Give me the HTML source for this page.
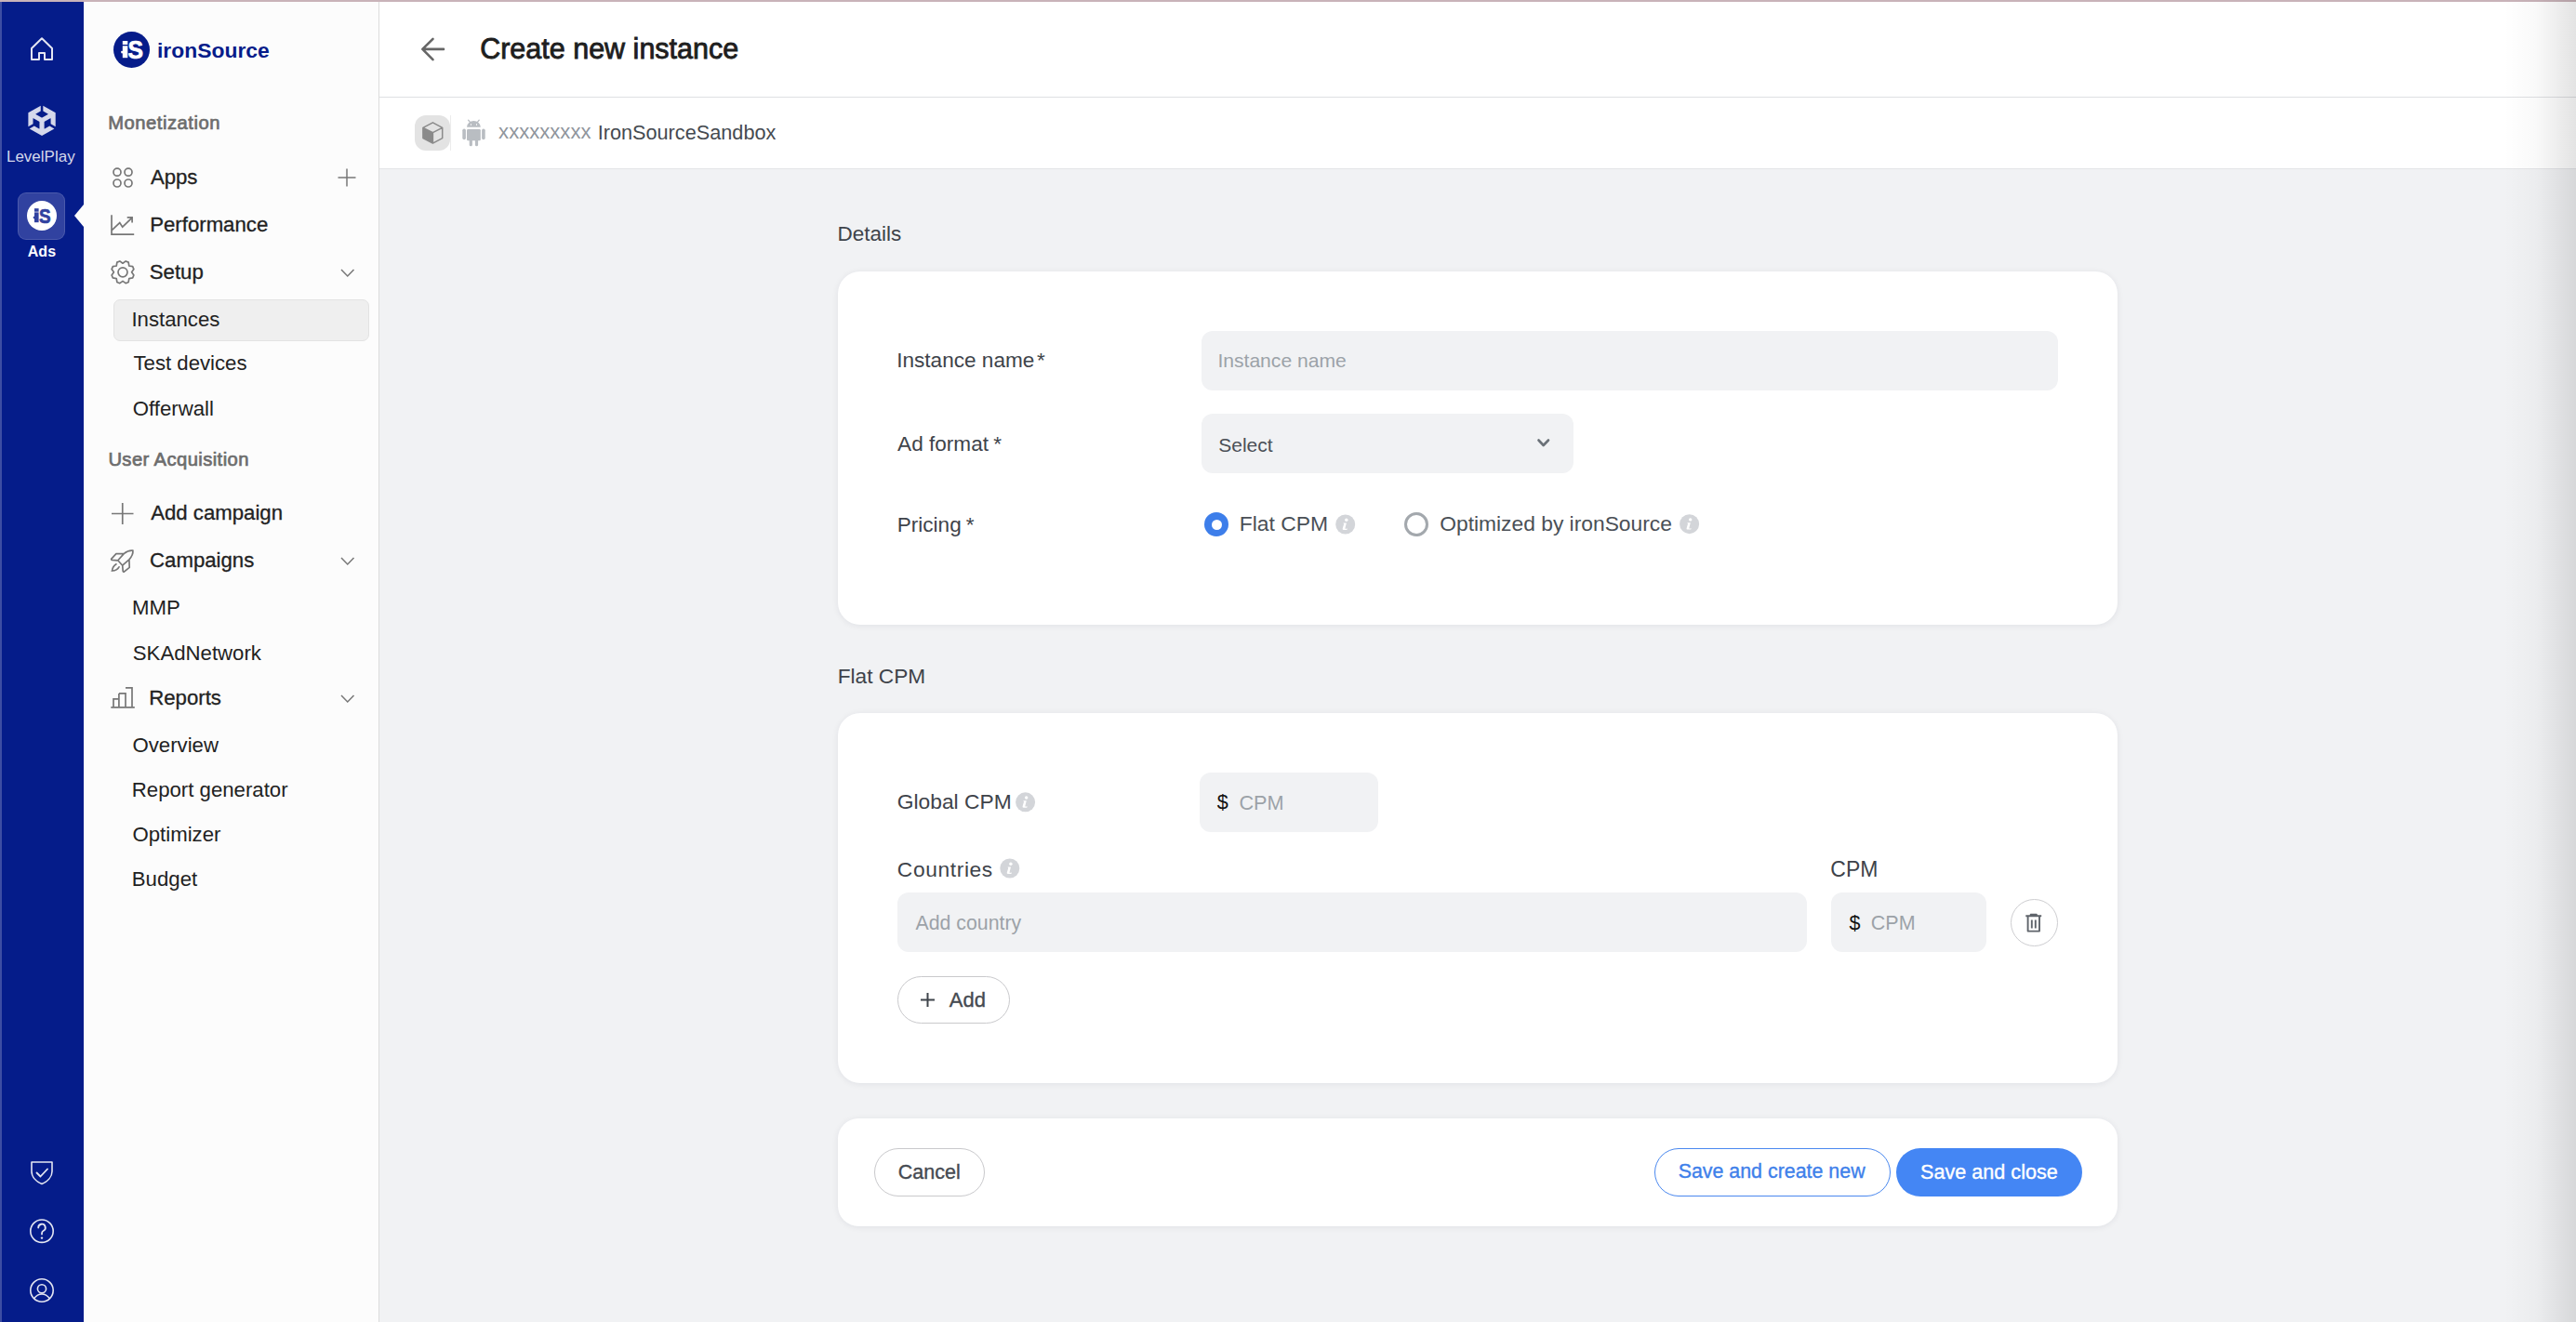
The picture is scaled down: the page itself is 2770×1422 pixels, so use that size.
<!DOCTYPE html>
<html><head><meta charset="utf-8"><style>
html,body{margin:0;padding:0;width:2770px;height:1422px;overflow:hidden;background:#f1f2f4}
.a{position:absolute}
.t{position:absolute;white-space:nowrap;line-height:1;font-family:"Liberation Sans",sans-serif}
svg.ov{position:absolute;left:0;top:0;pointer-events:none}
</style></head><body>
<div class="a" style="left:0px;top:0px;width:2770px;height:1422px;background:#f1f2f4"></div><div class="a" style="left:408px;top:0px;width:2362px;height:104px;background:#fff"></div><div class="a" style="left:408px;top:104px;width:2362px;height:1px;background:#dfe0e3"></div><div class="a" style="left:408px;top:105px;width:2362px;height:76px;background:#fff"></div><div class="a" style="left:408px;top:181px;width:2362px;height:1px;background:#e3e4e7"></div><div class="a" style="left:90px;top:0px;width:317px;height:1422px;background:#fcfcfc"></div><div class="a" style="left:407px;top:0px;width:1px;height:1422px;background:#dcdcdc"></div><div class="a" style="left:0px;top:0px;width:90px;height:1422px;background:#051c8a"></div><div class="a" style="left:0px;top:0px;width:2px;height:1422px;background:#3d4da3"></div><div class="a" style="left:0px;top:0px;width:2770px;height:2px;background:#c9b3b9"></div><div class="a" style="left:2692px;top:0px;width:78px;height:1422px;background:linear-gradient(90deg,rgba(0,0,0,0) 0%,rgba(0,0,0,0.025) 45%,rgba(0,0,0,0.11) 100%)"></div><div class="a" style="left:19px;top:207px;width:51px;height:51px;background:#3142a0;border:1px solid rgba(255,255,255,0.13);box-sizing:border-box;border-radius:9px"></div><div class="a" style="left:29px;top:216px;width:32px;height:32px;background:#fff;border-radius:50%"></div><div class="t" style="left:6.94px;top:160.05px;font-size:17px;color:#d5d8eb;font-weight:400;">LevelPlay</div><div class="t" style="left:29.82px;top:262.90px;font-size:16px;color:#ffffff;font-weight:700;">Ads</div><div class="a" style="left:80px;top:220px;width:0;height:0;border-top:12px solid transparent;border-bottom:12px solid transparent;border-right:10px solid #fcfcfc"></div><div class="a" style="left:122px;top:34px;width:39px;height:39px;background:#061c8a;border-radius:50%"></div><div class="t" style="left:169.00px;top:42.53px;font-size:22.9px;color:#061c8a;font-weight:700;">ironSource</div><div class="t" style="left:116.28px;top:121.83px;font-size:20.2px;color:#6d6d6d;font-weight:400;-webkit-text-stroke:0.7px currentColor;letter-spacing:0.52px;">Monetization</div><div class="t" style="left:161.90px;top:179.53px;font-size:22.2px;color:#222222;font-weight:400;-webkit-text-stroke:0.3px currentColor;">Apps</div><div class="t" style="left:161.22px;top:231.03px;font-size:22.2px;color:#222222;font-weight:400;-webkit-text-stroke:0.3px currentColor;">Performance</div><div class="t" style="left:160.79px;top:281.83px;font-size:22.2px;color:#222222;font-weight:400;-webkit-text-stroke:0.3px currentColor;">Setup</div><div class="a" style="left:122px;top:322px;width:275px;height:45px;background:#efefef;border:1px solid #e3e3e3;border-radius:7px;box-sizing:border-box"></div><div class="t" style="left:141.40px;top:332.63px;font-size:22.2px;color:#222222;font-weight:400;">Instances</div><div class="t" style="left:143.46px;top:380.23px;font-size:22.2px;color:#222222;font-weight:400;">Test devices</div><div class="t" style="left:142.79px;top:428.93px;font-size:22.2px;color:#222222;font-weight:400;">Offerwall</div><div class="t" style="left:116.38px;top:483.83px;font-size:20.2px;color:#6d6d6d;font-weight:400;-webkit-text-stroke:0.7px currentColor;letter-spacing:0.42px;">User Acquisition</div><div class="t" style="left:162.20px;top:540.93px;font-size:22.2px;color:#222222;font-weight:400;-webkit-text-stroke:0.3px currentColor;">Add campaign</div><div class="t" style="left:161.09px;top:592.03px;font-size:22.2px;color:#222222;font-weight:400;-webkit-text-stroke:0.3px currentColor;">Campaigns</div><div class="t" style="left:142.12px;top:643.43px;font-size:22.2px;color:#222222;font-weight:400;">MMP</div><div class="t" style="left:142.79px;top:691.83px;font-size:22.2px;color:#222222;font-weight:400;">SKAdNetwork</div><div class="t" style="left:160.22px;top:739.83px;font-size:22.2px;color:#222222;font-weight:400;-webkit-text-stroke:0.3px currentColor;">Reports</div><div class="t" style="left:142.49px;top:791.13px;font-size:22.2px;color:#222222;font-weight:400;">Overview</div><div class="t" style="left:141.82px;top:839.23px;font-size:22.2px;color:#222222;font-weight:400;">Report generator</div><div class="t" style="left:142.49px;top:887.03px;font-size:22.2px;color:#222222;font-weight:400;">Optimizer</div><div class="t" style="left:141.82px;top:935.23px;font-size:22.2px;color:#222222;font-weight:400;">Budget</div><div class="t" style="left:516.18px;top:37.28px;font-size:30.5px;color:#1e1e1e;font-weight:400;-webkit-text-stroke:0.85px currentColor;">Create new instance</div><div class="a" style="left:446px;top:124px;width:38px;height:38px;background:#e3e3e3;border-radius:12px"></div><div class="a" style="left:484px;top:124px;width:1px;height:38px;background:#ececec"></div><div class="t" style="left:536.08px;top:131.22px;font-size:22.1px;color:#8f959c;font-weight:400;">xxxxxxxxx</div><div class="t" style="left:642.65px;top:131.75px;font-size:21.7px;color:#454a50;font-weight:400;">IronSourceSandbox</div><div class="t" style="left:900.60px;top:240.88px;font-size:22.5px;color:#3e434a;font-weight:400;">Details</div><div class="a" style="left:901px;top:292px;width:1376px;height:380px;background:#fff;border-radius:24px;box-shadow:0 1px 7px rgba(20,30,50,0.075);"></div><div class="t" style="left:964.17px;top:376.79px;font-size:22.6px;color:#3e434a;font-weight:400;">Instance name</div><div class="t" style="left:1115.07px;top:376.79px;font-size:22.6px;color:#3e434a;font-weight:400;">*</div><div class="a" style="left:1292px;top:356px;width:921px;height:64px;background:#f1f2f4;border-radius:12px"></div><div class="t" style="left:1309.40px;top:377.06px;font-size:21.1px;color:#9ca2a8;font-weight:400;">Instance name</div><div class="t" style="left:965.10px;top:466.79px;font-size:22.6px;color:#3e434a;font-weight:400;">Ad format</div><div class="t" style="left:1068.37px;top:466.79px;font-size:22.6px;color:#3e434a;font-weight:400;">*</div><div class="a" style="left:1292px;top:445px;width:400px;height:64px;background:#f1f2f4;border-radius:12px"></div><div class="t" style="left:1310.25px;top:467.65px;font-size:21px;color:#4a4f56;font-weight:400;">Select</div><div class="t" style="left:964.69px;top:553.59px;font-size:22.6px;color:#3e434a;font-weight:400;">Pricing</div><div class="t" style="left:1038.87px;top:553.59px;font-size:22.6px;color:#3e434a;font-weight:400;">*</div><div class="a" style="left:1295px;top:551px;width:26px;height:26px;background:#3d7eea;border-radius:50%"></div><div class="a" style="left:1302.5px;top:558.5px;width:11px;height:11px;background:#fff;border-radius:50%"></div><div class="t" style="left:1332.67px;top:551.63px;font-size:22.9px;color:#4a4f56;font-weight:400;">Flat CPM</div><div class="a" style="left:1510px;top:551px;width:26px;height:26px;border:3px solid #a3a8ad;border-radius:50%;box-sizing:border-box"></div><div class="t" style="left:1548.26px;top:551.62px;font-size:22.8px;color:#4a4f56;font-weight:400;">Optimized by ironSource</div><div class="t" style="left:900.68px;top:715.71px;font-size:22.7px;color:#3e434a;font-weight:400;">Flat CPM</div><div class="a" style="left:901px;top:767px;width:1376px;height:398px;background:#fff;border-radius:24px;box-shadow:0 1px 7px rgba(20,30,50,0.075);"></div><div class="t" style="left:964.76px;top:851.02px;font-size:22.8px;color:#3e434a;font-weight:400;">Global CPM</div><div class="a" style="left:1290px;top:831px;width:192px;height:64px;background:#f1f2f4;border-radius:12px"></div><div class="t" style="left:1308.79px;top:853.23px;font-size:21.5px;color:#111;font-weight:400;">$</div><div class="t" style="left:1332.41px;top:852.55px;font-size:21.7px;color:#9ca2a8;font-weight:400;">CPM</div><div class="t" style="left:964.86px;top:924.32px;font-size:22.8px;color:#3e434a;font-weight:400;letter-spacing:0.6px;">Countries</div><div class="t" style="left:1968.35px;top:923.85px;font-size:23px;color:#3e434a;font-weight:400;">CPM</div><div class="a" style="left:965px;top:960px;width:978px;height:64px;background:#f1f2f4;border-radius:12px"></div><div class="t" style="left:984.50px;top:983.29px;font-size:21.3px;color:#9ca2a8;font-weight:400;">Add country</div><div class="a" style="left:1969px;top:960px;width:167px;height:64px;background:#f1f2f4;border-radius:12px"></div><div class="t" style="left:1988.38px;top:983.23px;font-size:21.5px;color:#111;font-weight:400;">$</div><div class="t" style="left:2011.83px;top:982.73px;font-size:21.5px;color:#9ca2a8;font-weight:400;">CPM</div><div class="a" style="left:2162px;top:967px;width:51px;height:51px;border:1px solid #cdcdd0;border-radius:50%;box-sizing:border-box;background:#fff"></div><div class="a" style="left:965px;top:1050px;width:121px;height:51px;border:1px solid #c9c9cc;border-radius:26px;box-sizing:border-box;background:#fff"></div><div class="t" style="left:1020.80px;top:1065.30px;font-size:22px;color:#454a51;font-weight:400;-webkit-text-stroke:0.35px currentColor;">Add</div><div class="a" style="left:901px;top:1203px;width:1376px;height:116px;background:#fff;border-radius:22px;box-shadow:0 1px 7px rgba(20,30,50,0.075);"></div><div class="a" style="left:940px;top:1235px;width:119px;height:52px;border:1px solid #c9c9cc;border-radius:26px;box-sizing:border-box;background:#fff"></div><div class="t" style="left:965.82px;top:1251.02px;font-size:21.5px;color:#454a51;font-weight:400;-webkit-text-stroke:0.35px currentColor;">Cancel</div><div class="a" style="left:1779px;top:1235px;width:254px;height:52px;border:1.5px solid #4a88ef;border-radius:26px;box-sizing:border-box;background:#fff"></div><div class="t" style="left:1804.63px;top:1250.11px;font-size:21.4px;color:#3e80ea;font-weight:400;-webkit-text-stroke:0.35px currentColor;">Save and create new</div><div class="a" style="left:2039px;top:1235px;width:200px;height:52px;background:#4486f4;border-radius:26px"></div><div class="t" style="left:2065.12px;top:1249.94px;font-size:21.6px;color:#ffffff;font-weight:400;-webkit-text-stroke:0.35px currentColor;">Save and close</div>
<svg class="ov" width="2770" height="1422" viewBox="0 0 2770 1422"><path d="M34 64 V52 L45 41.3 L56 52 V64 H48 V57 H42 V64 Z" fill="none" stroke="#e4e6f2" stroke-width="2" stroke-linejoin="round"/><g transform="translate(45.05 129.8) scale(1.38 1.342) translate(-12 -12)"><path d="m12.9288 4.2939 3.7997 2.1929c.1366.077.1415.2905 0 .3675l-4.515 2.6076a.4192.4192 0 0 1-.4246 0L7.274 6.8543c-.139-.0745-.1415-.2905 0-.3675l3.7972-2.193V0L1.3758 5.5977V16.793l3.7177-2.1456v-4.3858c-.0025-.1565.1813-.2682.318-.1838l4.5148 2.6076a.4252.4252 0 0 1 .2136.3676v5.2127c.0025.1565-.1813.2682-.3179.1838l-3.7996-2.1929-3.7178 2.1457L12 24l9.6954-5.5977-3.7178-2.1457-3.7996 2.1929c-.1341.082-.3229-.0248-.3179-.1838V13.053c0-.1565.087-.2956.2136-.3676l4.5149-2.6076c.1341-.082.3228.0224.3179.1838v4.3858l3.7177 2.1456V5.5977L12.9288 0Z" fill="#d5d8eb"/></g><path d="M34 1250 H56 V1260 C56 1266 51 1271 45 1273.5 C39 1271 34 1266 34 1260 Z" fill="none" stroke="#e4e6f2" stroke-width="1.6" stroke-linejoin="round"/><path d="M39.5 1261.5 L43.5 1265.5 L51 1257.5" fill="none" stroke="#e4e6f2" stroke-width="1.8" stroke-linecap="round" stroke-linejoin="round"/><circle cx="45" cy="1324.2" r="12.2" fill="none" stroke="#e4e6f2" stroke-width="1.6"/><path d="M41.2 1320.5 A3.8 3.8 0 1 1 46.5 1324 C45.3 1324.6 45 1325.3 45 1326.7 V1327.5" fill="none" stroke="#e4e6f2" stroke-width="1.8" stroke-linecap="round"/><circle cx="45" cy="1331.6" r="1.2" fill="#e4e6f2"/><circle cx="45" cy="1388" r="12.2" fill="none" stroke="#e4e6f2" stroke-width="1.6"/><circle cx="45" cy="1386.3" r="4.6" fill="none" stroke="#e4e6f2" stroke-width="1.6"/><path d="M36.5 1396.8 C39 1393.5 42 1392 45 1392 C48 1392 51 1393.5 53.5 1396.8" fill="none" stroke="#e4e6f2" stroke-width="1.6"/><rect x="37" y="224.2" width="4.6" height="3.5" fill="#3142a0"/><rect x="37" y="228.4" width="4.6" height="10.8" fill="#3142a0"/><rect x="35.8" y="232.8" width="1.6" height="2.4" rx="0.6" fill="#3142a0"/><text transform="translate(42.1 239.6) scale(0.86 1)" font-family="Liberation Sans" font-weight="700" font-size="22" fill="#3142a0" stroke="#3142a0" stroke-width="0.7">S</text><rect x="131.8" y="44" width="5.5" height="4" fill="#fff"/><rect x="131.8" y="49.3" width="5.5" height="12.9" fill="#fff"/><rect x="130.2" y="54.8" width="2" height="2.6" rx="0.8" fill="#fff"/><text transform="translate(137.4 62.6) scale(0.9 1)" font-family="Liberation Sans" font-weight="700" font-size="27.5" fill="#fff" stroke="#fff" stroke-width="0.7">S</text><circle cx="126" cy="185.2" r="4" fill="none" stroke="#777777" stroke-width="1.7"/><circle cx="126" cy="197" r="4" fill="none" stroke="#777777" stroke-width="1.7"/><circle cx="138" cy="185.2" r="4" fill="none" stroke="#777777" stroke-width="1.7"/><circle cx="138" cy="197" r="4" fill="none" stroke="#777777" stroke-width="1.7"/><path d="M363.5 191 H382.5 M373 181.5 V200.5" stroke="#777777" stroke-width="1.5"/><path d="M120 231.3 V252.1 H144.2 M120 247.9 L128.75 239.6 L131.7 244.2 L142.1 234.2 M136.7 233.8 H142.1 V239.6" fill="none" stroke="#777777" stroke-width="1.7"/><path d="M132.00 283.20 L135.18 280.92 L138.15 282.15 L138.79 286.01 L142.65 286.65 L143.88 289.62 L141.60 292.80 L143.88 295.98 L142.65 298.95 L138.79 299.59 L138.15 303.45 L135.18 304.68 L132.00 302.40 L128.82 304.68 L125.85 303.45 L125.21 299.59 L121.35 298.95 L120.12 295.98 L122.40 292.80 L120.12 289.62 L121.35 286.65 L125.21 286.01 L125.85 282.15 L128.82 280.92 Z" fill="none" stroke="#777777" stroke-width="1.7" stroke-linejoin="round"/><circle cx="132" cy="292.8" r="5" fill="none" stroke="#777777" stroke-width="1.7"/><path d="M367 290 L373.75 297 L380.5 290" fill="none" stroke="#777777" stroke-width="1.5"/><path d="M367 600 L373.75 607 L380.5 600" fill="none" stroke="#777777" stroke-width="1.5"/><path d="M367 748 L373.75 755 L380.5 748" fill="none" stroke="#777777" stroke-width="1.5"/><path d="M120 552.5 H143.5 M131.75 541 V564" stroke="#777777" stroke-width="1.7"/><path d="M126.8 602.8 L131.7 608.2 L138.9 601.9 C141.5 599 143.3 596 142.9 592.2 C139 591.8 136 593.3 133.2 595.6 Z M133.2 595.6 H124.9 L119.6 601.3 C119.6 602 120 602.3 120.5 602.3 L126.8 602.8 M138.9 601.9 L139.2 610.3 L133.3 615.2 C132.6 615.2 132.3 614.8 132.2 614.3 L131.7 608.2" fill="none" stroke="#777777" stroke-width="1.7" stroke-linejoin="round"/><path d="M125 606.8 C122 608.5 120.8 611.5 120.5 614 C123.5 613.8 126.5 612.5 128 609.8" fill="none" stroke="#777777" stroke-width="1.7" stroke-linecap="round"/><path d="M119.3 760.9 H144.8 M122 760.9 V751.9 H127.9 V760.9 M127.9 745.9 H135 V760.9 M135 739.8 H142 V760.9 M127.9 751.9 V745.9" fill="none" stroke="#777777" stroke-width="1.7"/><path d="M477 52.9 H454.5 M465.5 41.8 L454.3 52.9 L465.5 64.2" fill="none" stroke="#666" stroke-width="2.6" stroke-linecap="round" stroke-linejoin="round"/><path d="M454.9 137.3 L465.4 142.6 V154.1 L454.9 148.6 Z" fill="#8a8a8a"/><path d="M465.4 131.8 L475.7 137.3 V148.6 L465.4 154.1 L454.9 148.6 V137.3 Z M454.9 137.3 L465.4 142.6 L475.7 137.3 M465.4 142.6 V154.1" fill="none" stroke="#8a8a8a" stroke-width="1.5" stroke-linejoin="round"/><path d="M502 136.7 A7.4 6.6 0 0 1 516.8 136.7 Z" fill="#b9bdc2"/><rect x="502" y="139" width="14.8" height="12.3" rx="1.2" fill="#b9bdc2"/><rect x="497.3" y="138.4" width="3.6" height="11.9" rx="1.8" fill="#b9bdc2"/><rect x="518.1" y="138.4" width="3.6" height="11.9" rx="1.8" fill="#b9bdc2"/><rect x="504.7" y="148" width="3.2" height="9.3" rx="1.6" fill="#b9bdc2"/><rect x="510.9" y="148" width="3.2" height="9.3" rx="1.6" fill="#b9bdc2"/><path d="M503.6 129.2 L506 132.2 M515.2 129.2 L512.8 132.2" stroke="#b9bdc2" stroke-width="1.3" stroke-linecap="round"/><rect x="506" y="133.3" width="1" height="1.5" fill="#fff"/><rect x="512" y="133.3" width="1" height="1.5" fill="#fff"/><path d="M1654.5 473.5 L1659.7 479 L1665 473.5" fill="none" stroke="#6b7178" stroke-width="2.6" stroke-linecap="round" stroke-linejoin="round"/><circle cx="1446.7" cy="564" r="10.5" fill="#d3d5d9"/><circle cx="1447.8" cy="559.2" r="1.7" fill="#fff"/><path d="M1444.4 562.5 H1447.9 L1446.4 568.3 C1446.3 568.9 1446.9 568.9 1448.9 568.6 L1448.3 569.9 H1444.7 C1443.8 569.9 1443.5 569.3 1443.7 568.5 L1445.1000000000001 563.7 Z" fill="#fff"/><circle cx="1816.6" cy="563.7" r="10.5" fill="#d3d5d9"/><circle cx="1817.6999999999998" cy="558.9000000000001" r="1.7" fill="#fff"/><path d="M1814.3 562.2 H1817.8 L1816.3 568.0 C1816.1999999999998 568.6 1816.8 568.6 1818.8 568.3000000000001 L1818.1999999999998 569.6 H1814.6 C1813.6999999999998 569.6 1813.3999999999999 569.0 1813.6 568.2 L1815.0 563.4000000000001 Z" fill="#fff"/><circle cx="1102.6" cy="862.8" r="10.5" fill="#d3d5d9"/><circle cx="1103.6999999999998" cy="858.0" r="1.7" fill="#fff"/><path d="M1100.3 861.3 H1103.8 L1102.3 867.0999999999999 C1102.1999999999998 867.6999999999999 1102.8 867.6999999999999 1104.8 867.4 L1104.1999999999998 868.6999999999999 H1100.6 C1099.6999999999998 868.6999999999999 1099.3999999999999 868.0999999999999 1099.6 867.3 L1101.0 862.5 Z" fill="#fff"/><circle cx="1085.8" cy="934" r="10.5" fill="#d3d5d9"/><circle cx="1086.8999999999999" cy="929.2" r="1.7" fill="#fff"/><path d="M1083.5 932.5 H1087.0 L1085.5 938.3 C1085.3999999999999 938.9 1086.0 938.9 1088.0 938.6 L1087.3999999999999 939.9 H1083.8 C1082.8999999999999 939.9 1082.6 939.3 1082.8 938.5 L1084.2 933.7 Z" fill="#fff"/><path d="M2178.3 985.3 H2195.2 M2183.7 985.3 V983.6 H2189.8 V985.3 M2180.6 986 V1001.6 H2193 V986 M2184.8 989.5 V998.5 M2188.8 989.5 V998.5" fill="none" stroke="#5f646b" stroke-width="1.9" stroke-linejoin="round"/><path d="M990 1075.5 H1005 M997.5 1068 V1083" stroke="#3f444b" stroke-width="2"/></svg>
</body></html>
